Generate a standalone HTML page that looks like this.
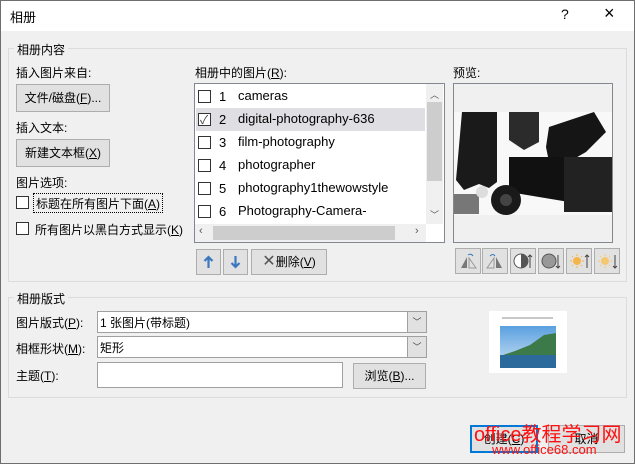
<!DOCTYPE html>
<html><head><meta charset="utf-8"><style>
*{box-sizing:border-box;margin:0;padding:0}
body{width:635px;height:464px;overflow:hidden;background:#f0f0f0;font-family:"Liberation Sans","Noto Sans CJK SC",sans-serif;font-size:12px;color:#000;position:relative}
.a{position:absolute;white-space:nowrap}
.frame{position:absolute;left:0;top:0;width:635px;height:464px;border:1px solid #6e6e6e;pointer-events:none}
.title{position:absolute;left:1px;top:1px;width:633px;height:30px;background:#fff}
.grp{position:absolute;border:1px solid #dcdcdc}
.gl{position:absolute;background:#f0f0f0;padding:0 3px}
.btn{position:absolute;background:#e1e1e1;border:1px solid #adadad;text-align:center}
.cb{position:absolute;width:13px;height:13px;border:1px solid #333;background:#fff}
.row{position:absolute;left:196px;width:229px;height:23px}
.row .cb{left:2px;top:5px}
.row .n{position:absolute;left:23px;top:4px;font-size:13px}
.row .t{position:absolute;left:42px;top:3px;font-size:13px}
.ib{position:absolute;top:248px;width:26px;height:26px;background:#e1e1e1;border:1px solid #adadad}
.inp{position:absolute;background:#fff;border:1px solid #a0a0a0}
u{text-decoration:underline}
</style></head><body>
<div class="title"></div>
<div class="a" style="left:10px;top:7px;font-size:13px">相册</div>
<div class="a" style="left:561px;top:6px;font-size:14px">?</div>
<div class="a" style="left:604px;top:3px;font-size:18px">×</div>

<div class="grp" style="left:8px;top:48px;width:619px;height:234px"></div>
<div class="gl a" style="left:14px;top:41px">相册内容</div>
<div class="a" style="left:16px;top:64px">插入图片来自:</div>
<div class="btn" style="left:16px;top:84px;width:94px;height:28px;line-height:26px">文件/磁盘(<u>F</u>)...</div>
<div class="a" style="left:16px;top:119px">插入文本:</div>
<div class="btn" style="left:16px;top:139px;width:94px;height:28px;line-height:26px">新建文本框(<u>X</u>)</div>
<div class="a" style="left:16px;top:174px">图片选项:</div>
<div class="cb" style="left:16px;top:196px"></div>
<div class="a" style="left:33px;top:193px;border:1px dotted #000;padding:1px 2px;height:20px">标题在所有图片下面(<u>A</u>)</div>
<div class="cb" style="left:16px;top:222px"></div>
<div class="a" style="left:35px;top:221px">所有图片以黑白方式显示(<u>K</u>)</div>

<div class="a" style="left:195px;top:64px">相册中的图片(<u>R</u>):</div>
<div class="a" style="left:194px;top:83px;width:251px;height:160px;background:#fff;border:1px solid #828790"></div>
<div class="row" style="top:85px"><div class="cb"></div><div class="n">1</div><div class="t">cameras</div></div>
<div class="row" style="top:108px;background:#dedee3"><div class="cb"></div><div class="a" style="left:4px;top:3px;font-size:12px;color:#444">✓</div><div class="n">2</div><div class="t">digital-photography-636</div></div>
<div class="row" style="top:131px"><div class="cb"></div><div class="n">3</div><div class="t">film-photography</div></div>
<div class="row" style="top:154px"><div class="cb"></div><div class="n">4</div><div class="t">photographer</div></div>
<div class="row" style="top:177px"><div class="cb"></div><div class="n">5</div><div class="t">photography1thewowstyle</div></div>
<div class="row" style="top:200px"><div class="cb"></div><div class="n">6</div><div class="t">Photography-Camera-</div></div>
<div class="a" style="left:426px;top:84px;width:17px;height:140px;background:#f0f0f0"></div>
<div class="a" style="left:427px;top:102px;width:15px;height:79px;background:#cdcdcd"></div>
<div class="a" style="left:430px;top:88px;font-size:9px;color:#555">︿</div>
<div class="a" style="left:430px;top:208px;font-size:9px;color:#555">﹀</div>
<div class="a" style="left:195px;top:224px;width:231px;height:18px;background:#f0f0f0"></div>
<div class="a" style="left:213px;top:226px;width:182px;height:14px;background:#cdcdcd"></div>
<div class="a" style="left:199px;top:225px;font-size:11px;color:#555">‹</div>
<div class="a" style="left:415px;top:225px;font-size:11px;color:#555">›</div>

<div class="btn" style="left:196px;top:249px;width:25px;height:26px"><svg width="23" height="24"><path d="M11.5 18V7M7.5 11l4-4 4 4" stroke="#3a78c0" stroke-width="2.2" fill="none"/></svg></div>
<div class="btn" style="left:223px;top:249px;width:25px;height:26px"><svg width="23" height="24"><path d="M11.5 6v11M7.5 13l4 4 4-4" stroke="#3a78c0" stroke-width="2.2" fill="none"/></svg></div>
<div class="btn" style="left:251px;top:249px;width:76px;height:26px;line-height:24px"><span style="font-size:16px;color:#555">✕</span>删除(<u>V</u>)</div>

<div class="a" style="left:453px;top:64px">预览:</div>
<div class="a" style="left:453px;top:83px;width:160px;height:160px;border:1px solid #828790;background:#f0f0f0"></div>
<svg class="a" style="left:454px;top:112px" width="158" height="103" viewBox="0 0 158 103">
<rect width="158" height="103" fill="#f8f8f8"/>
<path d="M8 0h35v70l-8 6-10-4-15 6-8-10z" fill="#1a1a1a"/>
<path d="M55 0h30v30l-15 8-15-10z" fill="#2b2b2b"/>
<path d="M95 15l45-15 12 20-20 20-35 20-5-25z" fill="#151515"/>
<path d="M55 45h60v45l-60-10z" fill="#111"/>
<rect x="110" y="45" width="48" height="55" fill="#222"/>
<circle cx="52" cy="88" r="15" fill="#1a1a1a"/><circle cx="52" cy="88" r="6" fill="#444"/>
<rect x="0" y="82" width="25" height="20" fill="#777"/>
<circle cx="28" cy="80" r="6" fill="#ddd"/>
</svg>
<div class="ib" style="left:455px"><svg width="24" height="24"><path d="M5 19L11 8v11z" fill="#777"/><path d="M13 19l7 0-7-10z" fill="none" stroke="#999"/><path d="M12 6q3-2 5 1" stroke="#3a78c0" fill="none"/></svg></div>
<div class="ib" style="left:482px"><svg width="24" height="24"><path d="M19 19L13 8v11z" fill="#777"/><path d="M11 19H4l7-10z" fill="none" stroke="#999"/><path d="M7 7q3-3 5 0" stroke="#3a78c0" fill="none"/></svg></div>
<div class="ib" style="left:510px"><svg width="24" height="24"><circle cx="10" cy="12" r="7" fill="#fff" stroke="#555"/><path d="M10 5a7 7 0 0 1 0 14z" fill="#555"/><path d="M19 19V6m-2 2l2-2 2 2" stroke="#444" fill="none"/></svg></div>
<div class="ib" style="left:538px"><svg width="24" height="24"><circle cx="10" cy="12" r="7" fill="#999" stroke="#555"/><path d="M19 6v13m-2-2l2 2 2-2" stroke="#444" fill="none"/></svg></div>
<div class="ib" style="left:566px"><svg width="24" height="24"><circle cx="10" cy="12" r="4" fill="#f5b548"/><path d="M10 5v2M10 17v2M3 12h2M15 12h2M5 7l1 1M14 16l1 1M5 17l1-1M14 8l1-1" stroke="#f5b548"/><path d="M20 19V6m-2 2l2-2 2 2" stroke="#444" fill="none"/></svg></div>
<div class="ib" style="left:594px"><svg width="24" height="24"><circle cx="10" cy="12" r="4" fill="#f5c870"/><path d="M10 5v2M10 17v2M3 12h2M15 12h2M5 7l1 1M14 16l1 1M5 17l1-1M14 8l1-1" stroke="#f5c870"/><path d="M20 6v13m-2-2l2 2 2-2" stroke="#444" fill="none"/></svg></div>

<div class="grp" style="left:8px;top:297px;width:619px;height:101px"></div>
<div class="gl a" style="left:14px;top:290px">相册版式</div>
<div class="a" style="left:16px;top:314px">图片版式(<u>P</u>):</div>
<div class="inp" style="left:97px;top:311px;width:330px;height:22px"></div>
<div class="a" style="left:100px;top:314px">1 张图片(带标题)</div>
<div class="a" style="left:407px;top:312px;width:19px;height:20px;background:#e1e1e1;border-left:1px solid #a0a0a0;text-align:center;font-size:9px;line-height:20px;color:#444">﹀</div>
<div class="a" style="left:16px;top:340px">相框形状(<u>M</u>):</div>
<div class="inp" style="left:97px;top:336px;width:330px;height:22px"></div>
<div class="a" style="left:100px;top:339px">矩形</div>
<div class="a" style="left:407px;top:337px;width:19px;height:20px;background:#e1e1e1;border-left:1px solid #a0a0a0;text-align:center;font-size:9px;line-height:20px;color:#444">﹀</div>
<div class="a" style="left:16px;top:367px">主题(<u>T</u>):</div>
<div class="inp" style="left:97px;top:362px;width:246px;height:26px"></div>
<div class="btn" style="left:353px;top:363px;width:73px;height:26px;line-height:24px">浏览(<u>B</u>)...</div>
<div class="a" style="left:489px;top:311px;width:78px;height:62px;background:#fff"></div>
<div class="a" style="left:502px;top:317px;width:51px;height:2px;background:#c8c8c8"></div>
<svg class="a" style="left:500px;top:326px" width="56" height="42"><defs><linearGradient id="s" x1="0" y1="0" x2="0" y2="1"><stop offset="0" stop-color="#5aa0e0"/><stop offset="1" stop-color="#cfe4f4"/></linearGradient></defs><rect width="56" height="42" fill="url(#s)"/><path d="M0 30l15-5 15-6 14-10 12-2v24H0z" fill="#3d7a4a"/><rect y="29" width="56" height="13" fill="#2c6a9c"/></svg>

<div class="a" style="left:470px;top:425px;width:68px;height:28px;border:2px solid #0078d7;background:#e1e1e1;text-align:center;line-height:24px">创建(<u>C</u>)</div>
<div class="btn" style="left:548px;top:425px;width:77px;height:28px;line-height:26px">取消</div>
<div class="a" style="left:474px;top:418px;font-size:20px;color:#ff1010">office教程学习网</div>
<div class="a" style="left:492px;top:442px;font-size:13px;color:#ff1010">www.office68.com</div>
<div class="frame"></div>
</body></html>
